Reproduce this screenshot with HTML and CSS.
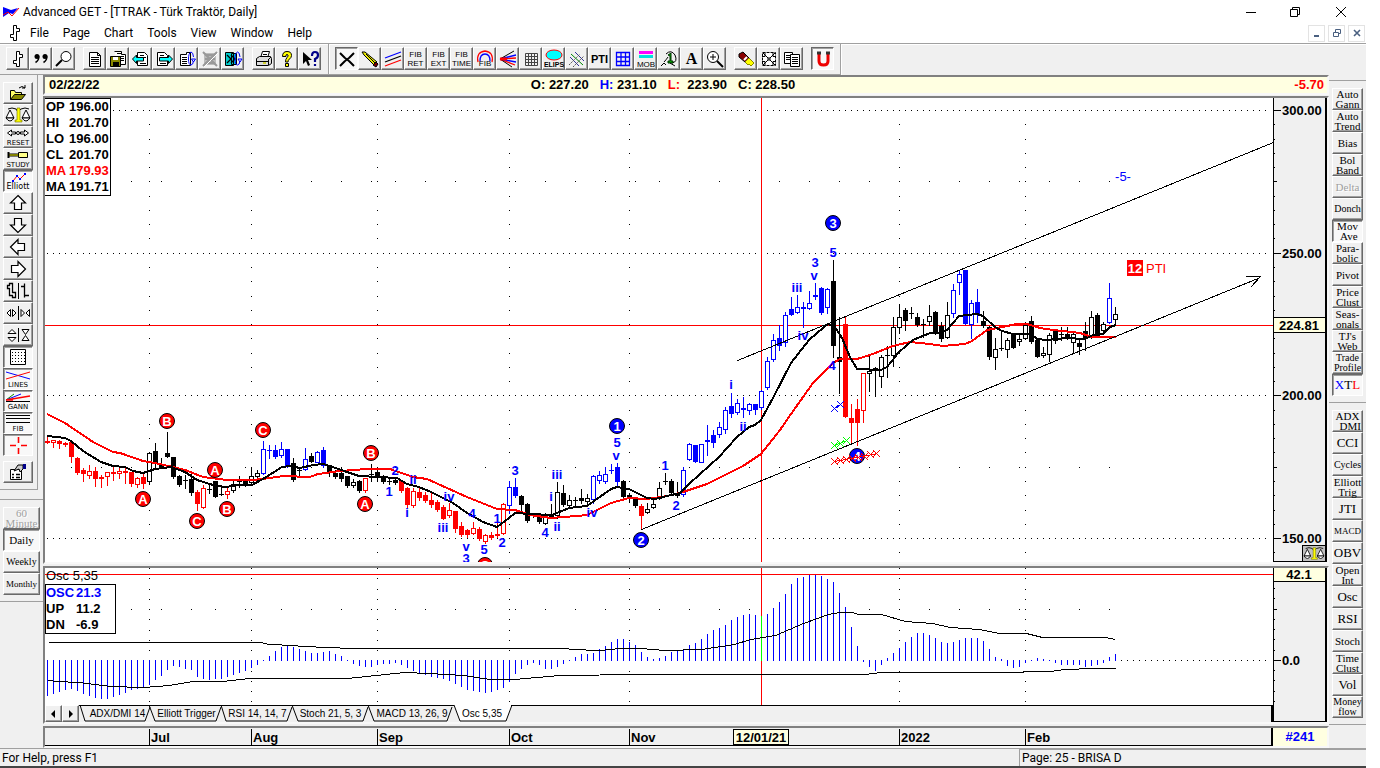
FILE: index.html
```html
<!DOCTYPE html>
<html lang="en">
<head>
<meta charset="utf-8">
<title>Advanced GET - [TTRAK - Türk Traktör, Daily]</title>
<link rel="stylesheet" href="styles.css">
</head>
<body>
<svg class="defs" aria-hidden="true">
  <symbol id="i-bar" viewBox="0 0 20 20"><path d="M8.500 17.500V14.500H5.500V11.500H8.500V2.500H11.500V5.500H14.500V8.500H11.500V17.500z" fill="#fff" stroke="#000"/></symbol>
  <symbol id="i-scales" viewBox="0 0 26 18"><path d="M3 3q4-2 8 0l2 3 3-3q4-2 8 0" fill="none" stroke="#000"/><path d="M12 2h3v12h2v2h-7v-2h2z" fill="#ff0" stroke="#660" stroke-width=".6"/><path d="M5 4l-4 8h8zM21 4l-4 8h8z" fill="#fff" stroke="#000"/><path d="M1 12q4 6 8 0zM17 12q4 6 8 0z" fill="#fff" stroke="#000"/></symbol>
  <symbol id="i-arrow" viewBox="0 0 20 20"><path d="M10 2.500L17.500 10H13.500V16.500H6.500V10H2.500z" fill="#fff" stroke="#000" stroke-width="1.200"/></symbol>
  <symbol id="i-page" viewBox="0 0 20 20"><path d="M4.500 3.500h8l3 3v11h-11z" fill="#fff" stroke="#000"/><path d="M12.500 3.500v3h3M6 8.500h8M6 10.500h8M6 12.500h8M6 14.500h8" fill="none" stroke="#000"/></symbol>
</svg>
<div class="app">
  <header class="title">
    <svg width="18" height="12" viewBox="0 0 18 12"><path d="M1 1l8 3 7-2-5 6-4-1-6 4z" fill="#00f"/><path d="M1 9l5-3 4 4 7-8" fill="none" stroke="#f00"/></svg>
    <span>Advanced GET - [TTRAK - Türk Traktör, Daily]</span>
    <div class="winctl">
      <button aria-label="Minimize"><svg width="12" height="12"><path d="M1 6.500h10"/></svg></button>
      <button aria-label="Restore"><svg width="12" height="12"><path d="M1.500 3.500h7v7h-7zM3.500 3.500v-2h7v7h-2"/></svg></button>
      <button aria-label="Close"><svg width="12" height="12"><path d="M1 1l10 10M11 1L1 11"/></svg></button>
    </div>
  </header>
  <nav class="menu">
    <svg width="20" height="20"><use href="#i-bar"/></svg>
    <button>File</button><button>Page</button><button>Chart</button><button>Tools</button><button>View</button><button>Window</button><button>Help</button>
    <div class="childctl">
      <button aria-label="Minimize child"><svg width="10" height="10"><path d="M2 8h5" stroke-width="2"/></svg></button>
      <button aria-label="Restore child"><svg width="10" height="10"><path d="M1.500 4.500h5v4h-5zM3.500 4v-2.500h5v4h-2"/></svg></button>
      <button aria-label="Close child"><svg width="10" height="10"><path d="M2 2l6 6M8 2L2 8" stroke-width="1.600"/></svg></button>
    </div>
  </nav>

  <div class="toolbar">
    <div class="bar">
      <div class="grp">
        <button class="b" aria-label="Bar chart"><svg><use href="#i-bar"/></svg></button>
        <button class="b" aria-label="Quote"><svg><circle cx="6" cy="7.500" r="2.500"/><circle cx="14" cy="7.500" r="2.500"/><path d="M7.500 7q1 4-3 6.500M15.500 7q1 4-3 6.500" fill="none" stroke="#000" stroke-width="1.600"/></svg></button>
        <button class="b" aria-label="Find"><svg><circle cx="12" cy="7.500" r="5" fill="#fff" stroke="#000"/><path d="M8 11l-6 6" stroke="#000" stroke-width="2"/></svg></button>
      </div>
      <div class="grp">
        <button class="b" aria-label="New"><svg><use href="#i-page"/></svg></button>
        <button class="b" aria-label="Save"><svg><path d="M6.500 2.500h7v3h4v10h-8" fill="#fff" stroke="#000"/><path d="M9 4.500h4M12 7.500h4M12 9.500h4M12 11.500h4" stroke="#000"/><path d="M2.500 7.500h10v10h-10z" fill="#880" stroke="#000"/><path d="M5 8h5v3H5z" fill="#fff"/><path d="M5 13h6v4H5z"/></svg></button>
        <button class="b" aria-label="Previous page"><svg><path d="M6.500 3.500h7l3 3v10h-10z" fill="#fff" stroke="#000"/><path d="M9 6.500h4M11 8.500h4M9 14.500h6" stroke="#000"/><path d="M1.500 10l4-4v2.500h7v3.500h-7v2.500z" fill="#0ff" stroke="#000"/></svg></button>
        <button class="b" aria-label="Next page"><svg><path d="M3.500 3.500h7l3 3v10h-10z" fill="#fff" stroke="#000"/><path d="M6 6.500h4M6 14.500h6" stroke="#000"/><path d="M18.500 10l-4-4v2.500h-9v3.500h9v2.500z" fill="#0ff" stroke="#000"/></svg></button>
        <button class="b" aria-label="Reload page"><svg><path d="M3.500 5.500h6v-2h4v13h-10z" fill="#fff" stroke="#000"/><path d="M5 8.500h5M5 10.500h5M5 12.500h5M5 14.500h5" stroke="#000"/><path d="M16.500 8q-.5-5-2.500-5-2.500 1-2.500 7t2.500 6q2 0 2.500-4m-2-2h4l-2 3z" fill="none" stroke="#00f"/></svg></button>
        <button class="b" aria-label="Delete page" disabled><svg><path d="M4 4h12v12H4z" fill="#bbb"/><path d="M3 3l14 14M17 3L3 17M5 6h10M5 10h10M5 14h10" stroke="#999" stroke-width="2"/><path d="M4 18L18 4" stroke="#fff"/></svg></button>
        <button class="b" aria-label="Reload all"><svg><path d="M2.500 3.500h8v13h-8zM8.500 4.500h5v11h-5z" fill="#0cc" stroke="#000"/><path d="M4 6l4 4-4 4M8 6l4 4-4 4" stroke="#000" fill="none" stroke-width="1.300"/><path d="M17 8q-.5-5-2.500-5-2.500 1-2.500 7t2.500 6q2 0 2.500-4m-2-2h4l-2 3z" fill="none" stroke="#00f"/></svg></button>
      </div>
      <div class="grp">
        <button class="b" aria-label="Print"><svg><path d="M6.500 9l2-6.500h7L13.500 9" fill="#fff" stroke="#000"/><path d="M2.500 9.500l3-2h11l1 2v5l-3 2h-12z" fill="#ddd" stroke="#000"/><path d="M9 5.500h4M8 7.500h4M3 12.500h11M14.500 10v6M14 11l3-3" stroke="#000"/><path d="M9 14h3" stroke="#cc0" stroke-width="1.500"/></svg></button>
        <button class="b" aria-label="Help"><svg><path d="M5.500 7.500q0-5 4.500-5t4.500 4q0 2-2 3.500-1.500 1-1.500 3H8.500q0-3 1.500-4.500 1.500-1.500 1-2.500-1-1-2 0v1.500zM8.500 14.500h3v3h-3z" fill="#ff0" stroke="#000"/></svg></button>
        <button class="b" aria-label="Context help"><svg><path d="M3 3v12l3-3 2 5 2-1-2-5h4z"/><path d="M12 7q0-4 3-4t3 3-3 4v3M15 15v2" fill="none" stroke="#008" stroke-width="2.200"/></svg></button>
      </div>
    </div>
    <div class="bar">
      <div class="grp">
        <button class="b on" aria-label="Crosshair"><svg><path d="M3 4l5 5M17 4l-5 5M3 17l5-5M17 17l-5-5M8 9l4 3M12 9l-4 3" stroke="#000" stroke-width="2"/></svg></button>
        <button class="b" aria-label="Pencil"><svg><path d="M2 3h3l12 10-3 3L4 6z" fill="#ee0" stroke="#000"/><path d="M6 5l9 9" stroke="#000"/><path d="M16 13l2 2-2 3-3-2z" fill="#700" stroke="#000"/></svg></button>
        <button class="b" aria-label="Parallel lines"><svg><path d="M2 9L18 3" stroke="#00f" stroke-width="1.300"/><path d="M2 13L18 7" stroke="#000" stroke-width="1.300"/><path d="M2 17l16-6" stroke="#f00" stroke-width="1.300"/></svg></button>
        <button class="b t">FIB<br>RET</button>
        <button class="b t">FIB<br>EXT</button>
        <button class="b t">FIB<br>TIME</button>
        <button class="b" aria-label="Fib arcs"><svg><path d="M3 13q-2-10 7-11 9 1 7 11" fill="none" stroke="#f00" stroke-width="1.300"/><path d="M5 12q0-7 5-7t5 7" fill="none" stroke="#00f" stroke-width="1.300"/><text x="10" y="17" text-anchor="middle">FIB</text></svg></button>
        <button class="b" aria-label="Gann fan"><svg><path d="M2 10l16-1M2 10l15 6" stroke="#f00" stroke-width="1.300"/><path d="M2 10l16-4M2 10l16 3" stroke="#00f" stroke-width="1.300"/><path d="M2 10l14-8M2 10l12 8" stroke="#000"/><path d="M2 10h7" stroke="#f00" stroke-width="3"/></svg></button>
        <button class="b" aria-label="Grid"><svg><path d="M4.500 4.500h12v12h-12zM7.500 4v12M10.500 4v12M13.500 4v12M4 7.500h12M4 10.500h12M4 13.500h12" fill="none" stroke="#444"/></svg></button>
        <button class="b" aria-label="Ellipse"><svg><ellipse cx="10" cy="6" rx="8" ry="5" fill="#0ff" stroke="#f00"/><text x="10" y="18" text-anchor="middle" class="bold">ELIPS</text></svg></button>
        <button class="b" aria-label="Channels"><svg><path d="M4 5l12 11" stroke="#080"/><path d="M3 8l9 9M8 3l9 9" stroke="#339"/><path d="M2 16L13 5M6 18L17 7" stroke="#555" stroke-dasharray="2 1"/></svg></button>
        <button class="b pti">PTI</button>
        <button class="b" aria-label="Price grid"><svg><path d="M3.500 3.500h13v13h-13zM8 3v13M12.500 3v13M3 8h13M3 12.500h13" fill="none" stroke="#00f" stroke-width="1.300"/></svg></button>
        <button class="b" aria-label="MOB"><svg><path d="M3 2h14v3H3z" fill="#f0f"/><path d="M3 6h14v3H3z" fill="#0dd"/><text x="10" y="18" text-anchor="middle">MOB</text></svg></button>
        <button class="b" aria-label="Bias cycle"><svg><path d="M7 5q5-5 9 1 3 7-3 8M9 8q-2 3-4 5" fill="none" stroke="#000"/><path d="M9 6l3-2v8h2v2H9v-2h2V7z" fill="#0a0" stroke="#030"/><path d="M2 17l3-3 2 2M11 14l5 3" fill="none" stroke="#000"/></svg></button>
        <button class="b letter">A</button>
        <button class="b" aria-label="Zoom in"><svg><circle cx="8" cy="8" r="5.500" fill="#fff" stroke="#000"/><path d="M5 8h6M8 5v6" stroke="#000"/><path d="M12 12l6 6" stroke="#000" stroke-width="2"/></svg></button>
      </div>
      <div class="grp">
        <button class="b" aria-label="Erase"><svg><path d="M3 5l4-2 6 6-4 4-6-5z" fill="#800" stroke="#000"/><path d="M9 13l4-4 5 5-3 3-2-2-1 1z" fill="#ff0" stroke="#880"/><path d="M8 11l3-3" stroke="#fff" stroke-width="2"/></svg></button>
        <button class="b" aria-label="Expand"><svg><path d="M3.500 3.500h13v13h-13z" fill="#fff" stroke="#000" stroke-dasharray="3 1"/><path d="M4 4l5 5M16 4l-5 5M4 16l5-5M16 16l-5-5M6 3.500v4h-3M14 3.500v4h3M6 16.500v-4h-3M14 16.500v-4h3M8 10h4M10 8v4" fill="none" stroke="#000"/></svg></button>
        <button class="b" aria-label="Copy pages"><svg><path d="M2.500 3.500h8v11h-8z" fill="#fff" stroke="#000"/><path d="M4 6.500h5M4 8.500h5M4 10.500h5" stroke="#000"/><path d="M8.500 5.500h9v12h-9z" fill="#fff" stroke="#000"/><path d="M10 8.500h6M10 10.500h6M10 12.500h6M10 14.500h6" stroke="#000"/></svg></button>
      </div>
      <div class="grp">
        <button class="b on" aria-label="Magnet"><svg><path d="M6 3v9q0 4 4.500 4t4.500-4V3" fill="none" stroke="#e00" stroke-width="3"/><path d="M4 4h4M13 4h4" stroke="#333" stroke-width="3"/></svg></button>
      </div>
    </div>
  </div>

  <main class="work">
    <aside class="left">
      <div class="tools">
        <button class="b" aria-label="Open"><svg><path d="M2.500 16.500v-9h4l1 2h6v3" fill="#ff6" stroke="#000"/><path d="M2.500 16.500l4-5h11l-4 5z" fill="#880" stroke="#000"/><path d="M11 5q3-3 6 0m0-3v3h-3" fill="none" stroke="#000"/></svg></button>
        <button class="b" aria-label="Scales"><svg class="w26"><use href="#i-scales"/></svg></button>
        <button class="b c"><svg><path d="M2.500 5l4-3v2h4v2h-4v2zM23.500 5l-4-3v2h-4v2h4v2z" fill="#fff" stroke="#000"/><circle cx="13" cy="5" r="1.500" fill="#fff" stroke="#000"/></svg><span>RESET</span></button>
        <button class="b c"><svg><path d="M3.500 2v6" stroke="#000" stroke-width="2"/><path d="M4 4h10v2H4z" fill="#ff0" stroke="#000"/><path d="M13.500 2.500h9v5h-9z" fill="#ff8" stroke="#000"/></svg><span>STUDY</span></button>
        <button class="b c on"><svg><path d="M8 9l4-5 3 3 5-5" fill="none" stroke="#f00"/><path d="M7 8h2v2H7zM11 3h2v2h-2zM14 6h2v2h-2zM19 1h2v2h-2z" fill="#00f"/></svg><span class="mix">Elliott</span></button>
        <button class="b" aria-label="Up"><svg><use href="#i-arrow"/></svg></button>
        <button class="b" aria-label="Down"><svg class="r180"><use href="#i-arrow"/></svg></button>
        <button class="b" aria-label="Left"><svg class="r270"><use href="#i-arrow"/></svg></button>
        <button class="b" aria-label="Right"><svg class="r90"><use href="#i-arrow"/></svg></button>
        <button class="b" aria-label="Bar width"><svg class="w26"><path d="M2.500 4.500h2v-2h3v9h3v5h-3v-2h-3v-7h-2zM19.500 2.500v14M16 5.500h3M20 14.500h4" fill="#fff" stroke="#000" stroke-width="1.300"/><path d="M13.500 2v16" stroke="#000"/></svg></button>
        <button class="b" aria-label="Horizontal spacing"><svg class="w26"><path d="M5.500 6.500v7L2 10zM7.500 6.500v7L11 10zM16 6.500v7l3.500-3.500zM24.500 6.500v7L21 10z" fill="#fff" stroke="#000"/><path d="M13.500 3v14" stroke="#000"/></svg></button>
        <button class="b" aria-label="Vertical spacing"><svg class="w26"><path d="M3 8.500h8L7 4.500zM3 12.500h8l-4 4zM17 4.500h7l-3.500 5zM17 15.500h7l-3.500-5z" fill="#fff" stroke="#000"/><path d="M13.500 3v14" stroke="#000"/></svg></button>
        <button class="b on" aria-label="Show grid"><svg><path d="M2.500 2.500h15v15h-15z" fill="#fff" stroke="#000"/><path d="M4 5.500h13M4 8.500h13M4 11.500h13M4 14.500h13" stroke="#000" stroke-dasharray="1 2"/></svg></button>
        <button class="b c on"><svg><path d="M1 2l24 7" stroke="#00f"/><path d="M1 9l24-7" stroke="#f00"/></svg><span>LINES</span></button>
        <button class="b c on"><svg><path d="M1 8l8-6" stroke="#080"/><path d="M1 8l15-6" stroke="#00f"/><path d="M1 8l24-4M1 8h7" stroke="#f00" stroke-width="1.300"/><path d="M1 9.500h24" stroke="#000"/></svg><span>GANN</span></button>
        <button class="b c on"><svg><path d="M1 1.500h24M1 4.500h24M1 8.500h24" stroke="#000"/></svg><span>FIB</span></button>
        <button class="b on" aria-label="Cross"><svg><path d="M2 10.500h6M13 10.500h6M10.500 2v6M10.500 13v6" stroke="#f00" stroke-width="1.600"/></svg></button>
        <button class="b props" aria-label="Properties"><svg><path d="M2.500 7.500h11v10h-11z" fill="#fff" stroke="#000"/><path d="M4 12.500h2M8 12.500h4M4 15.500h2M8 15.500h4" stroke="#000" stroke-width="1.500"/><path d="M6 9l4-6h5v4l-3 3-1-3z" fill="#ccc" stroke="#000"/><path d="M15 2h3v5h-3z" fill="#008"/></svg></button>
      </div>
      <div class="periods">
        <button class="b s" disabled>60<br>Minute</button>
        <button class="b s on">Daily</button>
        <button class="b s small">Weekly</button>
        <button class="b s tiny">Monthly</button>
      </div>
    </aside>

    <section class="center">
      <div class="quote">
        <span>02/22/22</span>
        <p><span>O: 227.20</span><span><i class="blue">H:</i> 231.10</span><span><i class="red">L:</i>&nbsp; 223.90</span><span>C: 228.50</span></p>
        <span class="red">-5.70</span>
      </div>
      <div class="panel chart">
        <svg class="plot"><g id="price" transform="translate(-45 -98)"></g></svg>
        <svg class="axis"><g id="priceAxis" transform="translate(-1273 -98)"></g></svg>
        <dl class="values">
          <dt>OP</dt><dd>196.00</dd><dt>HI</dt><dd>201.70</dd><dt>LO</dt><dd>196.00</dd><dt>CL</dt><dd>201.70</dd>
          <dt class="red">MA</dt><dd class="red">179.93</dd><dt>MA</dt><dd>191.71</dd>
        </dl>
      </div>
      <div class="panel osc">
        <div class="oscmain">
          <svg class="plot"><g id="osc" transform="translate(-45 -568)"></g></svg>
          <div class="tabs">
            <svg class="tabshape"><path d="M35 0l5 16h60l5-14M104 0l6 16h61l5-14M176 0l5 16h61l5-14M247 0l6 16h65l5-14M323 0l6 16h73l5-14"/><path class="act" d="M409 0l6 16h46l6-16"/><path d="M0 .5H409M466 .5H3000"/></svg>
            <button class="b nav" aria-label="Scroll left"><svg><path d="M5 4v8L1 8z"/></svg></button>
            <button class="b nav" aria-label="Scroll right"><svg><path d="M2 4v8l4-4z"/></svg></button>
            <button class="tab t1">ADX/DMI 14</button><button class="tab t2">Elliott Trigger</button><button class="tab t3">RSI 14, 14, 7</button><button class="tab t3">Stoch 21, 5, 3</button><button class="tab t4">MACD 13, 26, 9</button><button class="tab t5">Osc 5,35</button>
          </div>
        </div>
        <svg class="axis"><g id="oscAxis" transform="translate(-1273 -568)"></g></svg>
        <div class="oscname">Osc 5,35</div>
        <dl class="values oscvals"><dt class="blue">OSC</dt><dd class="blue">21.3</dd><dt>UP</dt><dd>11.2</dd><dt>DN</dt><dd>-6.9</dd></dl>
      </div>
      <div class="panel time">
        <svg class="plot"><g id="time" transform="translate(-45 -728)"></g></svg>
        <div class="count">#241</div>
      </div>
    </section>

    <aside class="right">
      <div class="studies">
        <button class="b s">Auto<br>Gann</button><button class="b s">Auto<br>Trend</button><button class="b s">Bias</button><button class="b s">Bol<br>Band</button><button class="b s" disabled>Delta</button><button class="b s small">Donch</button><button class="b s on">Mov<br>&nbsp;Ave</button><button class="b s">Para-<br>bolic</button><button class="b s">Pivot</button><button class="b s">Price<br>Clust</button><button class="b s">Seas-<br>onals</button><button class="b s">TJ's<br>Web</button><button class="b s small">Trade<br>Profile</button><button class="b s big on"><i class="blue">X</i>T<i class="red">L</i></button>
      </div>
      <div class="studies">
        <button class="b s">ADX<br>&nbsp; DMI</button><button class="b s big">CCI</button><button class="b s small">Cycles</button><button class="b s">Elliott<br>Trig</button><button class="b s big">JTI</button><button class="b s tiny">MACD</button><button class="b s big">OBV</button><button class="b s">Open<br>Int</button><button class="b s big">Osc</button><button class="b s big">RSI</button><button class="b s">Stoch</button><button class="b s">Time<br>Clust</button><button class="b s big">Vol</button><button class="b s small">Money<br>flow</button>
      </div>
    </aside>
  </main>

  <footer class="status"><span>For Help, press F1</span><span class="page">Page: 25 - BRISA D</span></footer>
  <div class="edge"></div>
</div>
<script src="chart.js"></script>
</body>
</html>
```
FILE: styles.css
```css
* { box-sizing: border-box; }
body { margin: 0; background: #fff; color: #000; font: 12px/16px Roboto, "Open Sans", sans-serif; overflow: hidden; }
button { font: inherit; color: inherit; padding: 0; border: 0; background: none; }
i { font-style: normal; }
.defs { position: absolute; width: 0; height: 0; }
.red { color: #f00; }
.blue { color: #00f; }

.app { display: flex; flex-direction: column; height: 100vh; margin-right: 14px; background: #f0f0f0; }

.title { display: flex; align-items: center; height: 23px; padding-left: 2px; gap: 3px; background: #fff; }
.winctl { display: flex; margin-left: auto; }
.winctl button { display: flex; align-items: center; justify-content: center; width: 46px; height: 22px; }
.winctl button:nth-child(2) { width: 42px; }
.winctl button:last-child { width: 50px; }
.winctl svg, .childctl svg { fill: none; stroke: #000; }

.menu { display: flex; align-items: center; height: 20px; padding-left: 5px; background: #fff; }
.menu > svg { margin-right: 5px; }
.menu > button { margin-right: 14px; }
.childctl { display: flex; gap: 3px; margin-left: auto; padding-right: 1px; }
.childctl button { display: flex; align-items: center; justify-content: center; width: 17px; height: 17px; border: 1px solid #e3e3e3; }
.childctl svg { stroke: #4a6080; }

.toolbar { display: flex; height: 32px; border-top: 1px solid #a0a0a0; box-shadow: inset 0 1px #fff; }
.bar { display: flex; gap: 8px; padding: 3px 7px 0 6px; border-right: 1px solid #a0a0a0; border-bottom: 1px solid #a0a0a0; box-shadow: 1px 0 #fff; }
.bar + .bar { padding-right: 6px; }
.grp { display: flex; }

.b { display: flex; align-items: center; justify-content: center; width: 23px; height: 23px; border: 1px solid; border-color: #fff #696969 #696969 #fff; box-shadow: inset -1px -1px #a0a0a0; background: #f0f0f0; }
.b svg { flex: none; width: 20px; height: 20px; }
.b svg.w26 { width: 26px; }
.b.on { border-color: #696969 #fff #fff #696969; box-shadow: inset 1px 1px #a0a0a0; background: #f8f8f8; }
.b:disabled { color: #a0a0a0; text-shadow: 1px 1px #fff; }
.b.t { font: 8px/9px "Liberation Sans", sans-serif; }
.b text { font: 8px "Liberation Sans", sans-serif; }
.b text.bold { font-size: 7px; font-weight: bold; }
.b.pti { font: bold 11px "Liberation Sans", sans-serif; }
.b.letter { font: bold 16px "Liberation Serif", serif; }
.r90 { transform: rotate(90deg); }
.r180 { transform: rotate(180deg); }
.r270 { transform: rotate(270deg); }

.work { display: flex; flex: 1; min-height: 0; }
.left { width: 43px; }
.tools { width: 38px; padding: 7px 3px 6px; border-right: 1px solid #a0a0a0; border-bottom: 1px solid #a0a0a0; }
.tools .b { width: 30px; height: 22px; }
.b.c { flex-direction: column; }
.b.c svg { width: 26px; height: 11px; }
.b.c span { font: 7px/8px "DejaVu Sans", sans-serif; }
.b.c span.mix { font-size: 8px; }
.tools .props { margin-top: 5px; }
.periods { margin-top: 9px; padding: 7px 3px 6px; border-top: 1px solid #a0a0a0; border-bottom: 1px solid #a0a0a0; }
.periods .b { width: 37px; height: 22px; }
.b.s { font: 11px/10px "Liberation Serif", serif; white-space: nowrap; }
.b.tiny { font-size: 9px; }
.b.small { font-size: 10px; }
.b.big { font-size: 13px; }

.center { display: flex; flex-direction: column; flex: 1; min-width: 0; }
.quote, .panel { border: 2px solid; border-color: #808080 #f8f8f8 #f8f8f8 #808080; }
.quote { display: flex; justify-content: space-between; height: 20px; margin-bottom: 1px; padding: 0 3px 0 4px; background: #ffffe1; font: bold 13px/16px "Liberation Sans", sans-serif; }
.quote p { display: flex; gap: 11px; margin: 0; padding-right: 68px; }
.panel { position: relative; display: flex; min-height: 0; }
.plot { flex: 1; min-width: 0; height: 100%; background: #fff; }
.axis { flex: none; width: 54px; height: 100%; background: #f0f0f0; }
.plot text, .axis text { font: bold 13px "Liberation Sans", sans-serif; }
.plot text.thin { font-weight: normal; }
.chart { flex: 1; margin-bottom: 2px; }
.osc { height: 158px; margin-bottom: 2px; }
.oscmain { display: flex; flex-direction: column; flex: 1; min-width: 0; }
.time { height: 22px; }
.time .plot { background: #f0f0f0; }
.count { width: 54px; background: #ffffe1; color: #00f; text-align: center; font: bold 13px/18px "Liberation Sans", sans-serif; }

.values { position: absolute; top: 0; left: 0; display: grid; grid-template-columns: 22px auto; width: 66px; margin: 0; padding-left: 1px; border: 1px solid #000; border-left: 0; background: #fff; font: bold 13px/16px "Liberation Sans", sans-serif; }
.values dd { margin: 0; padding-left: 1px; text-align: left; }
.values dt { white-space: nowrap; }
.oscvals { top: 16px; width: 71px; grid-template-columns: 29px auto; border-left: 1px solid #000; padding-left: 0; }
.oscname { position: absolute; top: 0; left: 1px; font: 13px/16px "Liberation Sans", sans-serif; }

.tabs { position: relative; display: flex; flex: none; height: 17px; background: #f0f0f0; border-right: 2px solid #000; }
.tabshape { position: absolute; left: 0; top: 0; width: 100%; height: 17px; fill: none; stroke: #000; }
.tabshape .act { fill: #fff; }
.tabs .nav { position: relative; width: 17px; height: 17px; }
.tabs .nav svg { width: 8px; height: 16px; }
.tab { position: relative; font: 10px/16px "Liberation Sans", sans-serif; text-align: center; white-space: nowrap; }
.t1 { width: 73px; padding-left: 4px; }
.t2 { width: 69px; }
.t3 { width: 73px; }
.t4 { width: 90px; }
.t5 { width: 50px; }

.right { width: 37px; padding-top: 5px; background: #f0f0f0; }
.studies { padding: 7px 3px 6px; border-top: 1px solid #a0a0a0; }
.studies:last-child { border-bottom: 1px solid #a0a0a0; }
.studies .b { width: 31px; height: 22px; }

.status { display: flex; align-items: center; height: 18px; padding-left: 2px; border-top: 1px solid #a0a0a0; }
.page { width: 347px; margin-left: auto; padding-left: 2px; border-top: 1px solid #a0a0a0; border-left: 1px solid #a0a0a0; }
.edge { height: 2px; background: #444; }
```
FILE: chart.js
```js
// Chart data is kept in screen units: one bar every 6 units, starting at x = 47.
const X0 = 47, STEP = 6;
const barX = i => X0 + STEP * i;
const COLORS = { r: '#f00', k: '#000', b: '#00f' };

// kind, high, body top, body bottom, low (upper-case kind = hollow body)
const bars = `r435,441,443,443 R440,440,442,447 r440,441,444,448 r442,443,445,446 r441,442,457,462 r457,458,473,474 r468,470,474,481 R465,471,475,478 r467,471,479,486 r475,477,479,487
R472,472,476,485 r466,472,474,480 R467,471,473,478 r467,471,473,483 r472,472,484,486 R477,478,484,487 r472,477,484,488 K452,453,481,484 k443,451,464,469 k458,464,467,468
k432,453,457,457 k457,457,477,478 k475,476,485,486 k475,480,481,488 k473,479,493,495 r490,492,504,510 R485,488,507,508 k483,489,490,493 k481,481,497,497 k485,494,495,495
R487,491,494,498 K480,484,490,492 k476,481,482,487 k479,480,485,486 K467,476,482,485 K470,473,476,481 B441,449,473,474 b445,450,451,458 b445,450,457,458 B442,449,455,457
b449,449,466,467 k458,463,480,481 k467,470,471,475 B448,459,469,470 k453,456,462,462 B451,452,462,462 b447,450,466,467 k465,465,473,476 k470,473,477,478 k468,473,479,481
k476,476,486,487 K479,482,485,487 k480,481,491,492 R478,478,490,492 k464,474,475,481 k468,472,478,480 k475,476,482,483 k477,481,482,484 k479,480,483,484 r481,481,491,492
r487,488,505,507 R488,491,505,507 r488,492,498,500 r492,495,501,502 r493,500,505,507 r500,502,510,511 r505,507,519,519 R503,510,515,517 r511,511,529,532 r522,526,535,536
r529,530,535,537 R522,528,533,534 r527,529,539,540 R534,535,541,543 r532,535,538,539 r523,534,536,537 R503,504,533,534 B481,487,505,513 b478,487,496,497 k495,496,505,511
k503,504,521,522 k513,514,516,517 k515,516,522,523 K513,515,523,524 k504,515,517,517 K482,492,515,518 k485,493,505,506 K495,500,505,507 k497,500,501,505 k489,498,501,503
K494,498,501,503 B475,476,499,503 B471,475,480,483 B467,474,481,483 b464,470,471,473 b463,467,482,485 k480,481,497,498 k493,495,497,502 k497,497,506,507 r504,506,516,529
K503,509,512,513 K497,504,507,508 K482,488,498,499 k473,481,482,484 k479,481,493,495 k482,493,496,497 B467,470,494,496 B443,444,459,460 b445,445,462,462 B444,444,462,462
b425,440,442,455 b430,435,443,447 B422,427,434,437 B407,410,429,433 b393,406,414,417 B399,403,412,414 b397,408,410,417 B403,404,410,414 b404,404,410,414 B390,391,407,409
B357,361,387,389 B334,340,359,361 b325,338,346,350 B312,315,342,346 b297,309,315,315 B295,307,312,313 b302,307,309,327 B291,303,308,309 b283,295,297,299 b287,288,313,314
B288,289,307,313 k260,281,346,357 k317,357,362,393 r316,324,417,417 r404,418,423,443 r399,409,423,445 R373,373,410,422 K354,371,373,391 k367,368,369,396 K355,357,376,387
k346,355,356,377 K317,327,355,366 K304,317,327,333 k308,310,321,330 k307,313,314,318 k313,317,325,326 k319,324,325,337 K305,316,321,325 k311,312,333,334 k322,326,339,341
K302,315,337,338 B284,290,313,317 B270,274,282,294 b270,270,324,324 B300,303,324,338 b289,302,315,322 k311,321,326,327 k326,327,357,359 K338,349,357,369 k332,348,349,350
K338,340,349,357 k333,334,348,348 K333,339,341,345 K322,325,338,339 k316,321,342,343 k339,340,357,357 K347,353,355,357 K333,335,354,361 k330,331,341,343 k327,334,335,340
k327,334,338,339 K332,334,342,352 k338,343,347,354 k322,331,339,350 K311,317,337,338 k313,315,337,337 K322,324,330,331 B283,298,322,323 K307,314,319,325`.split(/\s+/);

const fastMA = '47,436 65,438 71,441 83,451 101,462 113,466 125,467 133,471 143,473 155,469 171,467 185,472 197,480 213,485 225,487 240,485 252,485 263,479 282,467 290,466 300,468 313,465 323,464 330,466 347,472 359,476 397,478 407,484 419,487 431,492 453,503 467,513 483,522 497,527 509,518 515,513 530,514 552,515 569,508 587,506 611,489 617,487 629,489 635,492 647,498 655,499 667,496 680,493 689,484 719,457 737,437 749,427 755,425 761,420 773,398 791,363 809,340 817,333 828,324 835,327 842,338 850,357 857,369 881,370 887,367 899,352 913,340 930,333 941,333 947,330 959,316 977,314 983,316 995,327 1002,331 1013,334 1031,334 1037,339 1047,340 1067,338 1085,339 1093,335 1103,334 1110,327 1116,325';
const slowMA = '47,414 65,423 93,442 113,452 120,453 143,461 155,463 173,467 185,470 203,477 227,480 251,480 263,479 283,476 310,477 318,474 340,471 367,469 390,469 413,477 427,479 467,497 497,509 515,510 530,515 551,518 577,516 587,515 611,503 629,498 647,499 667,496 683,492 707,484 743,466 761,454 780,430 791,414 813,383 833,363 840,359 857,359 870,355 893,346 910,342 930,344 943,346 965,344 972,341 987,330 1007,326 1017,324 1027,324 1040,328 1053,330 1080,333 1092,337 1116,337';

const months = [[149, 'Jul'], [251, 'Aug'], [377, 'Sep'], [509, 'Oct'], [629, 'Nov'], [899, '2022'], [1025, 'Feb']];
const weeks = [71, 101, 131, 161, 191, 215, 245, 281, 311, 341, 371, 395, 425, 455, 485, 515, 545, 575, 605, 635, 659, 689, 719, 749, 779, 809, 839, 869, 929, 959, 989, 1019, 1049, 1079, 1109];

const rect = (x, y, w, h, fill) => `<rect x="${x}" y="${y}" width="${w}" height="${h}" fill="${fill}"/>`;
const dot = (x, y) => rect(x, Math.round(y), 1, 1, '#000');
const line = (pts, color, w = 1) => `<polyline points="${pts}" fill="none" stroke="${color}" stroke-width="${w}"/>`;
// One-unit lines are centred on the pixel grid
const hair = (pts, color) => `<g transform="translate(.5 .5)">${line(pts, color)}</g>`;
const text = (x, y, s, color = '#000', anchor = 'middle', cls = '') =>
  `<text x="${x}" y="${y}" fill="${color}" text-anchor="${anchor}" class="${cls}">${s}</text>`;
const crisp = s => `<g shape-rendering="crispEdges">${s}</g>`;

function candle(spec, i) {
  const kind = spec[0], c = COLORS[kind.toLowerCase()];
  const [hi, top, bot, lo] = spec.slice(1).split(',').map(Number);
  const x = barX(i);
  let s = rect(x, hi, 1, lo - hi + 1, c);
  if (kind === kind.toLowerCase()) return s + rect(x - 2, top, 5, Math.max(1, bot - top), c);
  return s + rect(x - 2, top, 5, bot - top + 1, c) + rect(x - 1, top + 1, 3, Math.max(1, bot - top - 1), '#fff');
}

function badge([x, y, s, color]) {
  return `<circle cx="${x}" cy="${y}" r="7.500" fill="${color}" stroke="#000"/>` + text(x, y + 5, s, '#fff');
}

function crosses(x, y, n, dy, color) {
  let s = hair(`${x},${y} ${x + 6 * (n - 1)},${y + dy * (n - 1)}`, color);
  for (let i = 0; i < n; i++) {
    const cx = x + 6 * i, cy = Math.round(y + dy * i);
    for (let d = -3; d <= 3; d++) s += rect(cx + d, cy + d, 1, 1, color) + rect(cx + d, cy - d, 1, 1, color);
  }
  return s;
}

function drawPrice() {
  let grid = '';
  for (const y of [110, 253, 395, 538]) for (let x = 47; x < 1270; x += 6) grid += dot(x, y);
  for (const y of [181, 325, 467]) for (const x of weeks) grid += dot(x, y);
  for (const [x] of months) for (let y = 110; y < 562; y += 14.27) grid += dot(x, y);

  const badges = [[167, 421, 'B', '#f00'], [143, 499, 'A', '#f00'], [197, 521, 'C', '#f00'], [215, 470, 'A', '#f00'], [227, 509, 'B', '#f00'], [263, 430, 'C', '#f00'], [371, 453, 'B', '#f00'], [365, 504, 'A', '#f00'], [485, 565, 'C', '#f00'], [617, 426, '1', '#00f'], [641, 540, '2', '#00f'], [833, 223, '3', '#00f'], [857, 456, '4', '#00f']];
  const waves = [[395, 475, '2'], [389, 496, '1'], [413, 484, 'ii'], [407, 517, 'i'], [449, 501, 'iv'], [443, 532, 'iii'], [472, 518, '4'], [466, 551, 'v'], [466, 563, '3'], [484, 554, '5'], [497, 523, '1'], [502, 547, '2'], [515, 475, '3'], [557, 479, 'iii'], [551, 501, 'i'], [557, 531, 'ii'], [545, 537, '4'], [592, 517, 'iv'], [617, 447, '5'], [616, 460, 'v'], [665, 470, '1'], [676, 510, '2'], [731, 389, 'i'], [743, 431, 'ii'], [797, 292, 'iii'], [803, 340, 'iv'], [815, 267, '3'], [814, 280, 'v'], [833, 257, '5'], [832, 370, '4']];

  document.getElementById('price').innerHTML =
    crisp(grid + rect(45, 325, 4000, 1, '#f00') + rect(761, 98, 1, 470, '#f00') + bars.map(candle).join('') +
      line(slowMA, '#f00', 2) + line(fastMA, '#000', 2) +
      hair('737,360 1273,142', '#000') + hair('641,529 1260,277', '#000') + hair('1245,276 1260,276 1250,287', '#000')) +
    waves.map(([x, y, s]) => text(x, y, s, '#00f')).join('') + badges.map(badge).join('') +
    crisp(crosses(834, 408, 2, -4, '#00f') + crosses(834, 445, 3, -2.4, '#0f0') + crosses(834, 461, 8, -1.1, '#f00')) +
    text(1123, 181, '-5-', '#00f', 'middle', 'thin') +
    rect(1127, 260, 16, 16, '#f00') + text(1135, 273, '12', '#fff') + text(1146, 273, 'PTI', '#f00', 'start', 'thin');
}

function drawPriceAxis() {
  let s = rect(1273, 98, 1, 464, '#000') + rect(1325, 98, 2, 464, '#000') + rect(1273, 561, 54, 1, '#000');
  for (let k = 0, y = 110; y < 560; k++, y += 14.27) s += rect(1274, Math.round(y), k % 10 === 0 ? 7 : k % 5 === 0 ? 3 : 1, 1, '#000');
  s += rect(1273, 317, 54, 16, '#000') + rect(1274, 318, 51, 14, '#ffffe1');
  s += rect(1302, 545, 24, 16, '#000') + rect(1303, 546, 22, 15, '#c0c0c0');
  document.getElementById('priceAxis').innerHTML = crisp(s) +
    text(1282, 115, '300.00', '#000', 'start') + text(1282, 258, '250.00', '#000', 'start') +
    text(1282, 400, '200.00', '#000', 'start') + text(1282, 543, '150.00', '#000', 'start') +
    text(1299, 330, '224.81') + '<use href="#i-scales" x="1303" y="546" width="22" height="15"/>';
}

// End row of each histogram bar, in thirds of a unit below y = 560
const osc = [407, 402, 396, 390, 387, 393, 402, 408, 414, 417, 417, 411, 405, 399, 390, 387, 381, 375, 360, 348, 330, 318, 321, 327, 330, 351, 357, 360, 357, 356, 351, 346, 339, 333, 324, 315, 303, 288, 273, 261, 255, 261, 267, 273, 279, 279, 276, 273, 282, 289, 300, 313, 318, 321, 321, 315, 312, 312, 309, 315, 324, 333, 339, 345, 351, 354, 357, 363, 372, 381, 390, 393, 396, 399, 396, 390, 384, 365, 342, 327, 315, 309, 315, 327, 327, 321, 312, 303, 291, 282, 282, 279, 267, 258, 246, 237, 237, 246, 255, 276, 291, 297, 294, 288, 276, 272, 267, 255, 249, 237, 222, 210, 204, 195, 180, 171, 165, 162, 165, 168, 162, 144, 126, 102, 72, 54, 51, 45, 42, 48, 57, 66, 99, 141, 201, 258, 305, 321, 333, 315, 294, 279, 264, 246, 231, 219, 219, 225, 234, 246, 249, 246, 240, 234, 234, 234, 243, 267, 291, 297, 318, 324, 321, 309, 303, 294, 297, 303, 309, 315, 315, 315, 315, 321, 318, 315, 309, 291, 282];
const upper = '48,642 260,642 269,644 294,645 300,646 331,647 347,648 565,648 571,649 600,650 620,648 640,648 664,650 701,649 734,644 750,639 775,635 803,623 828,614 840,612 852,612 858,614 881,614 905,621 932,623 950,627 979,629 999,633 1026,633 1042,637 1105,637 1115,639';
const lower = '48,680 57,681 78,682 110,686 143,687 169,685 192,681 222,681 249,678 347,678 404,672 429,673 463,675 490,679 514,679 559,675 640,674 864,674 881,672 1020,672 1026,671 1050,671 1064,669 1093,668 1115,668';

function drawOsc() {
  let s = '';
  for (const x of weeks) s += dot(x, 609);
  for (const [x] of months) for (let y = 568; y < 705; y += 10.25) s += dot(x, y);
  for (let x = 1121; x < 1270; x += 6) s += dot(x, 660);
  s += rect(761, 568, 1, 137, '#f00');
  osc.forEach((v, i) => {
    const y = Math.round(560 + v / 3), top = Math.min(y, 660), bottom = Math.max(y, 661);
    s += rect(barX(i), top, 1, bottom - top, i === 119 ? '#0f0' : '#00f');
  });
  s += rect(45, 574, 4000, 1, '#f00') + hair(upper, '#000') + hair(lower, '#000');
  document.getElementById('osc').innerHTML = crisp(s);

  let a = rect(1273, 568, 1, 154, '#000') + rect(1325, 568, 2, 154, '#000') + rect(1273, 721, 54, 1, '#000') +
    rect(1274, 568, 51, 13, '#ffffe1') + rect(1274, 581, 52, 1, '#000');
  for (let y = 588; y < 710; y += 10.25) a += rect(1274, Math.round(y), 1, 1, '#000');
  a += rect(1274, 609, 3, 1, '#000') + rect(1274, 660, 7, 1, '#000');
  document.getElementById('oscAxis').innerHTML = crisp(a) + text(1299, 579, '42.1') + text(1282, 665, '0.0', '#000', 'start');
}

function drawTime() {
  let s = rect(45, 745, 4000, 1, '#000') + rect(1271, 728, 2, 18, '#000'), t = '';
  for (const [x, label] of months) {
    s += rect(x, 729, 1, 16, '#000');
    t += text(x + 2, 742, label, '#000', 'start');
  }
  s += rect(733, 729, 56, 16, '#000') + rect(734, 730, 54, 14, '#ffffe1');
  document.getElementById('time').innerHTML = crisp(s) + t + text(761, 742, '12/01/21');
}

drawPrice();
drawPriceAxis();
drawOsc();
drawTime();
```
